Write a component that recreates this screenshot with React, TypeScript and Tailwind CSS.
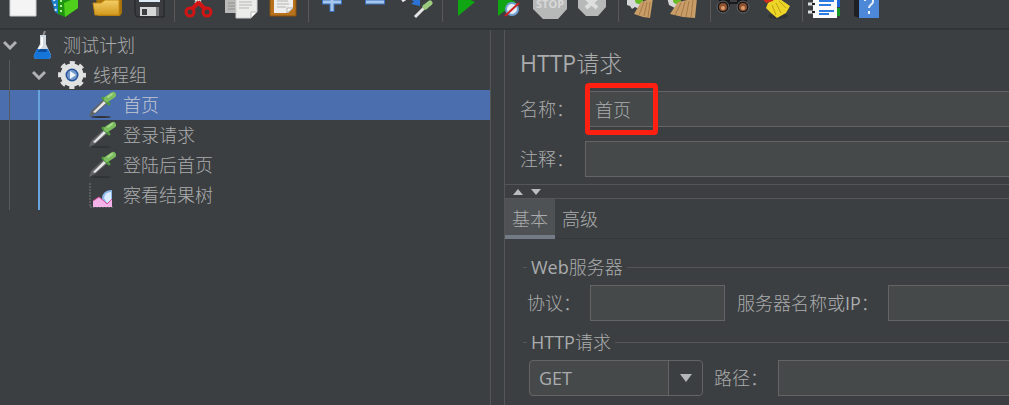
import type { ReactNode } from "react";

/* Toolbar drawings: each one fills a 42x28 button, cut off at the top edge */
const toolGroups: { label: string; art: ReactNode }[][] = [
  [
    { label: "新建", art: <path d="M8-4H34V16H8z" fill="#f4f4f4" stroke="#cfcfcf" /> },
    {
      label: "模板",
      art: (
        <>
          <path d="M6-4L16-2V15L11 12z" fill="#1d7fc9" />
          <path d="M10-1l2 13" stroke="#d8ecff" strokeWidth="2" strokeDasharray="2 3" />
          <path d="M14-3L34-5V8L21 17L14 14z" fill="#1e9410" />
          <path d="M20 3L34-3V8L21 17z" fill="#4fcf1b" />
          <path d="M17 0v14" stroke="#b9efa5" strokeWidth="2" strokeDasharray="2 3" />
        </>
      ),
    },
    {
      label: "打开",
      art: (
        <>
          <path d="M10-3H36V13L34 16H12z" fill="#a8730b" />
          <path d="M7 3H15L19 0H33V15H9z" fill="url(#folder)" stroke="#c78b14" />
        </>
      ),
    },
    {
      label: "保存",
      art: (
        <>
          <path d="M7-4H36V17H9L7 14z" fill="#3a3c3f" stroke="#222" />
          <path d="M11-4H32V2H11z" fill="#dcebf6" />
          <path d="M12 7H28V16H12z" fill="#d5d6d6" />
          <path d="M14 9h5v6h-5z" fill="#3c3f42" />
          <path d="M28 7H31V16H28z" fill="#77797b" />
        </>
      ),
    },
  ],
  [
    {
      label: "剪切",
      art: (
        <>
          <path d="M16-4L22 4M24-4L18 4" stroke="#d9d9d9" strokeWidth="4" />
          <path d="M21 2L14 9M20 2L27 9" stroke="#d31414" strokeWidth="4" />
          <circle cx="12" cy="12" r="4" fill="none" stroke="#d31414" strokeWidth="3" />
          <circle cx="29" cy="12" r="4" fill="none" stroke="#d31414" strokeWidth="3" />
        </>
      ),
    },
    {
      label: "复制",
      art: (
        <>
          <path d="M5-3H24V13H5z" fill="#b9b9b8" />
          <path d="M8 3h7M8 6h7M8 9h7" stroke="#909090" />
          <path d="M16-2H37V12L31 18H16z" fill="#ececeb" stroke="#cfcfcf" />
          <path d="M19 2h13M19 5h13M19 8h10" stroke="#b5b5b5" />
          <path d="M31 18V12H37z" fill="#fff" stroke="#b5b5b5" />
        </>
      ),
    },
    {
      label: "粘贴",
      art: (
        <>
          <path d="M8-4H34V16H8z" fill="#b8721b" stroke="#865011" />
          <path d="M12-3H31V8L26 13H12z" fill="#eeeeed" />
          <path d="M15 1h11M15 4h12M15 7h9" stroke="#b4b4b4" />
          <path d="M25 13V8H31z" fill="#fff" stroke="#b0b0b0" />
        </>
      ),
    },
  ],
  [
    {
      label: "展开",
      art: (
        <>
          <path d="M10 2H30M20-6V12" stroke="#3c70bd" strokeWidth="5" />
          <path d="M11 2H29M20-6V11" stroke="#a6c7ed" strokeWidth="3" />
        </>
      ),
    },
    {
      label: "折叠",
      art: (
        <>
          <path d="M11 2H31" stroke="#3c70bd" strokeWidth="5" />
          <path d="M12 2H30" stroke="#a6c7ed" strokeWidth="3" />
        </>
      ),
    },
    {
      label: "切换",
      art: (
        <>
          <path d="M6 1L12-3" stroke="#e8e8e8" strokeWidth="3" />
          <path d="M14-3L21 2" stroke="#2b74d6" strokeWidth="3" />
          <path d="M24-3V6L15 4z" fill="#2b74d6" />
          <path d="M19 17L28 8" stroke="#e5e5e5" strokeWidth="3" />
          <path d="M27 5L31 9" stroke="#4f9a3f" strokeWidth="2" />
          <path d="M29 7L34 3" stroke="#9ccb80" strokeWidth="5" strokeLinecap="round" />
        </>
      ),
    },
  ],
  [
    { label: "启动", art: <path d="M12-6L29 2L12 16z" fill="#10a512" /> },
    {
      label: "不停顿开始",
      art: (
        <>
          <path d="M10-6L28 2L10 16z" fill="#10a512" />
          <circle cx="24" cy="9" r="6" fill="#e4edf6" stroke="#6f9fd0" strokeWidth="2" />
          <path d="M17 16L31 3" stroke="#cf2020" strokeWidth="2" />
        </>
      ),
    },
    {
      label: "停止",
      art: (
        <>
          <path d="M3-6H37V9L28 19H13L3 9z" fill="#b7b8b8" />
          <text x="20" y="8" textAnchor="middle" fontSize="11" fontWeight="700" fill="#d9d9d9">
            STOP
          </text>
        </>
      ),
    },
    {
      label: "关闭",
      art: (
        <>
          <path d="M6-6H34V7L26 16H14L6 8z" fill="#b7b8b8" />
          <path d="M14-2L25 8M25-2L14 8" stroke="#dedede" strokeWidth="4" />
        </>
      ),
    },
  ],
  [
    {
      label: "清除",
      art: (
        <>
          <path d="M5-3H20V4L17 9L13 7L10 9L8 6L5 5z" fill="#d5d8d6" />
          <circle cx="17" cy="0" r="4" fill="#69bb25" />
          <path d="M19 2L31-2L28 18L21 17L12 14z" fill="#c89d67" />
          <path d="M22 2L17 15M25 2L22 16M28 2L26 17" stroke="#a67a49" />
        </>
      ),
    },
    {
      label: "清除全部",
      art: (
        <>
          <path d="M3-3H16V4L12 9L9 7L5 5z" fill="#d5d8d6" />
          <circle cx="13" cy="0" r="4" fill="#69bb25" />
          <path d="M14 2L33-2L31 18L19 17L6 14z" fill="#c89d67" />
          <path d="M17 3L11 15M21 2L17 16M25 1L22 17M29 0L27 17" stroke="#a67a49" />
        </>
      ),
    },
  ],
  [
    {
      label: "查找",
      art: (
        <>
          <path d="M5-4H16V2H23V-4H33V7H23V4H16V7H5z" fill="#17181a" />
          <circle cx="9" cy="7" r="6" fill="#1b1918" stroke="#63656a" />
          <circle cx="29" cy="7" r="6" fill="#1b1918" stroke="#63656a" />
          <circle cx="9" cy="7" r="4" fill="#8d5230" />
          <circle cx="29" cy="7" r="4" fill="#8d5230" />
          <circle cx="9" cy="8" r="2" fill="#dd9a6a" />
          <circle cx="29" cy="8" r="2" fill="#dd9a6a" />
        </>
      ),
    },
    {
      label: "重置搜索",
      art: (
        <>
          <ellipse cx="22" cy="16" rx="10" ry="3" fill="#303336" />
          <path d="M12 3L21-3L34 6L30 13L21 18L15 13L10 8z" fill="#ecd527" />
          <path d="M6-2L10 3L17 1L19-4z" fill="#d02b1b" />
          <path d="M16 5L20 15M20 3L25 13M23 1L30 8" stroke="#bda013" />
        </>
      ),
    },
  ],
  [
    {
      label: "函数助手",
      art: (
        <>
          <path d="M29-3H34V7H29z" fill="#2068d9" />
          <path d="M29 8H34V16H29z" fill="#179b24" />
          <path d="M7-3H31V18H7z" fill="#fbfbfb" />
          <path d="M13 1H28M13 5H25M13 11H28M13 14H23" stroke="#2c7be2" strokeWidth="2" />
          <path d="M2 4H9M2 12H9" stroke="#ddd" strokeWidth="3" />
          <path d="M6 4H9M6 12H9" stroke="#222" strokeWidth="2" />
        </>
      ),
    },
    {
      label: "帮助",
      art: (
        <>
          <path d="M6-3L11-4V18L6 16z" fill="#1d1f23" />
          <path d="M11-4H31V18H11z" fill="#4c87d8" />
          <path d="M17 1C17-4 26-4 25 2C24 5 21 5 21 8M21 11V14" fill="none" stroke="#e8f0fa" strokeWidth="2" />
        </>
      ),
    },
  ],
];

const samplers = ["首页", "登录请求", "登陆后首页"];

function Toolbar() {
  return (
    <header className="flex h-[30px] shrink-0 overflow-hidden border-b-2 border-[#323537] pl-0.5" role="toolbar">
      <svg className="absolute size-0" aria-hidden="true">
        <linearGradient id="folder" x2="0" y2="1">
          <stop stopColor="#f3cf69" />
          <stop offset="1" stopColor="#d29a1d" />
        </linearGradient>
      </svg>
      {toolGroups.map((group, i) => (
        <div key={i} className="flex shrink-0">
          {i > 0 && <span className="mr-[3px] ml-1 h-[22px] w-px bg-[#5a5957]" />}
          {group.map((tool) => (
            <button key={tool.label} type="button" aria-label={tool.label} className="h-7 w-[42px]">
              <svg viewBox="0 0 42 28" className="h-7 w-[42px]">
                {tool.art}
              </svg>
            </button>
          ))}
        </div>
      ))}
    </header>
  );
}

function Chevron() {
  return (
    <svg viewBox="0 0 14 10" className="h-2.5 w-3.5 shrink-0">
      <path d="M1 2L7 8L13 2" fill="none" stroke="#afb1b3" strokeWidth="3" />
    </svg>
  );
}

function Flask() {
  return (
    <svg viewBox="0 0 28 28" className="size-7 shrink-0">
      <path d="M15 5L17 0" stroke="#8b8f92" strokeWidth="2" />
      <path d="M12 4H18V13L23 24Q23 28 20 28H9Q5 28 6 24L12 13z" fill="#cfd8df" />
      <path d="M9 18H20L23 24Q23 28 20 28H9Q5 28 6 24z" fill="#1675d8" />
      <path d="M11 18H18L19 21H10z" fill="#0c4b9b" />
      <path d="M14 6V14L11 18" fill="none" stroke="#fff" strokeWidth="2" />
    </svg>
  );
}

function Gear() {
  return (
    <svg viewBox="0 0 28 28" className="size-7 shrink-0">
      <circle cx="14" cy="14" r="12" fill="none" stroke="#dedfdf" strokeWidth="4" strokeDasharray="5 4.42" strokeDashoffset="2.5" />
      <circle cx="14" cy="14" r="9" fill="#27539a" stroke="#e1e2e2" strokeWidth="5" />
      <circle cx="14" cy="14" r="5" fill="#7299ca" />
      <path d="M12 10L18 14L12 18z" fill="#eef4fb" />
    </svg>
  );
}

function Dropper() {
  return (
    <svg viewBox="0 0 28 28" className="size-7 shrink-0">
      <ellipse cx="13" cy="26" rx="10" ry="1" fill="#303336" />
      <path d="M1 26L3 20L16 8L20 12L7 23z" fill="#606365" />
      <path d="M5 21L16 10L18 12L7 22z" fill="#e4e5e5" />
      <path d="M15 7L21 13" stroke="#4f9a3f" strokeWidth="3" strokeLinecap="round" />
      <path d="M19 8L25 4" stroke="#7cbd60" strokeWidth="6" strokeLinecap="round" />
      <path d="M20 6L24 3" stroke="#a9d98f" strokeWidth="2" strokeLinecap="round" />
    </svg>
  );
}

function ResultChart() {
  return (
    <svg viewBox="0 0 28 28" className="size-7 shrink-0">
      <path d="M2 2V26H26" fill="none" stroke="#777a7c" strokeDasharray="2 1" />
      <path d="M14 17Q15 9 24 9V26H15z" fill="#8fb9ee" />
      <path d="M16 17Q17 11 23 11V19L19 22z" fill="#dcecff" />
      <path d="M5 20L11 16L16 20L19 23L24 18V26H5z" fill="#f3b3e9" />
      <path d="M5 20L11 16L16 20L19 23L24 18" fill="none" stroke="#d24f9a" />
    </svg>
  );
}

function TestTree() {
  return (
    <nav className="relative w-[491px] shrink-0 border-r border-[#555555]" aria-label="测试计划">
      <button type="button" className="flex h-[30px] w-full items-center pl-[3px]">
        <Chevron />
        <span className="ml-[11px] flex items-center gap-[7px]"><Flask />测试计划</span>
      </button>
      <button type="button" className="flex h-[30px] w-full items-center pl-8">
        <Chevron />
        <span className="ml-3 flex items-center gap-[7px]"><Gear />线程组</span>
      </button>
      {samplers.map((name) => (
        <button
          key={name}
          type="button"
          className={
            name === "首页"
              ? "flex h-[30px] w-full items-center gap-[7px] bg-[#4b6eaf] pl-[88px] text-[#c3c8d0]"
              : "flex h-[30px] w-full items-center gap-[7px] pl-[88px]"
          }
        >
          <Dropper />
          {name}
        </button>
      ))}
      <button type="button" className="flex h-[30px] w-full items-center gap-[7px] pl-[88px]">
        <ResultChart />
        察看结果树
      </button>
      {/* Indent guides */}
      <span className="absolute top-[30px] left-[9px] h-[150px] w-px bg-[#595a5a]" />
      <span className="absolute top-[60px] left-[38px] h-[120px] w-0.5 bg-[#67a3dc]" />
    </nav>
  );
}

const field = "h-9 min-w-0 border border-[#646464] bg-[#45494a] px-[9px] outline-none";

function RequestEditor() {
  return (
    <main className="ml-[13px] min-w-0 flex-1 border-l border-[#555555]">
      <section className="pt-[17px] pb-[7px] pl-[15px]">
        <h1 className="text-[23px] leading-8"><span className="font-normal">HTTP</span>请求</h1>
        <div className="mt-3 flex items-center">
          <label htmlFor="name" className="w-[65px] shrink-0">名称：</label>
          <div className="relative flex flex-1">
            <input id="name" defaultValue="首页" className={`${field} flex-1 border-r-0`} />
            <span className="pointer-events-none absolute -top-2 left-0 h-[52px] w-[73px] rounded border-[5px] border-[#ff2012]" />
          </div>
        </div>
        <div className="mt-3.5 flex items-center">
          <label htmlFor="comment" className="w-[65px] shrink-0">注释：</label>
          <input id="comment" className={`${field} flex-1 border-r-0`} />
        </div>
      </section>

      <div className="flex h-[15px] items-center gap-2 border-y border-[#555555] pl-2">
        <button type="button" aria-label="收起">
          <svg viewBox="0 0 10 6" className="h-1.5 w-2.5"><path d="M0 6L5 0L10 6z" fill="#bbbcbd" /></svg>
        </button>
        <button type="button" aria-label="展开">
          <svg viewBox="0 0 10 6" className="h-1.5 w-2.5"><path d="M0 0H10L5 6z" fill="#bbbcbd" /></svg>
        </button>
      </div>

      <div role="tablist" className="flex h-10 border-b border-[#35383a]">
        <button type="button" role="tab" aria-selected="true" className="h-10 bg-[#4e5254] px-[7px] shadow-[inset_0_-4px_0_#747a86]">
          基本
        </button>
        <button type="button" role="tab" aria-selected="false" className="h-10 px-[7px]">
          高级
        </button>
      </div>

      <fieldset className="mt-4 ml-[18px] min-w-0 border-t border-[#555555]">
        <legend className="ml-1 px-1 leading-6"><span className="font-medium">Web</span>服务器</legend>
        <div className="flex items-center pt-[6px] pl-1">
          <label htmlFor="protocol" className="w-[63px] shrink-0">协议：</label>
          <input id="protocol" className={`${field} w-[135px] shrink-0`} />
          <label htmlFor="server" className="ml-3 w-[151px] shrink-0">服务器名称或<span className="font-normal">IP</span>：</label>
          <input id="server" className={`${field} flex-1 border-r-0`} />
        </div>
      </fieldset>

      <fieldset className="mt-[9px] ml-[18px] min-w-0 border-t border-[#555555]">
        <legend className="ml-1 px-1 leading-6"><span className="font-normal">HTTP</span>请求</legend>
        <div className="flex items-center pt-[6px] pl-1.5">
          <div className="relative w-[174px] shrink-0">
            <select
              aria-label="方法"
              className="h-9 w-full appearance-none rounded border border-[#646464] bg-[#45494a] px-[9px] font-normal outline-none"
            >
              <option>GET</option>
              <option>POST</option>
            </select>
            <span className="pointer-events-none absolute inset-y-px right-px flex w-[34px] items-center justify-center rounded-r-sm border-l border-[#646464] bg-[#3c3f41]">
              <svg viewBox="0 0 12 8" className="h-2 w-3"><path d="M0 0H12L6 8z" fill="#b4b6b7" /></svg>
            </span>
          </div>
          <label htmlFor="path" className="ml-[11px] w-16 shrink-0">路径：</label>
          <input id="path" className={`${field} flex-1 border-r-0`} />
        </div>
      </fieldset>
    </main>
  );
}

export default function App() {
  return (
    <div className="flex min-h-screen flex-col overflow-hidden bg-[#3c3f41] font-['Open_Sans','Noto_Sans_CJK_SC',sans-serif] text-lg leading-6 font-light text-[#aaacad]">
      <Toolbar />
      <div className="flex flex-1">
        <TestTree />
        <RequestEditor />
      </div>
    </div>
  );
}
